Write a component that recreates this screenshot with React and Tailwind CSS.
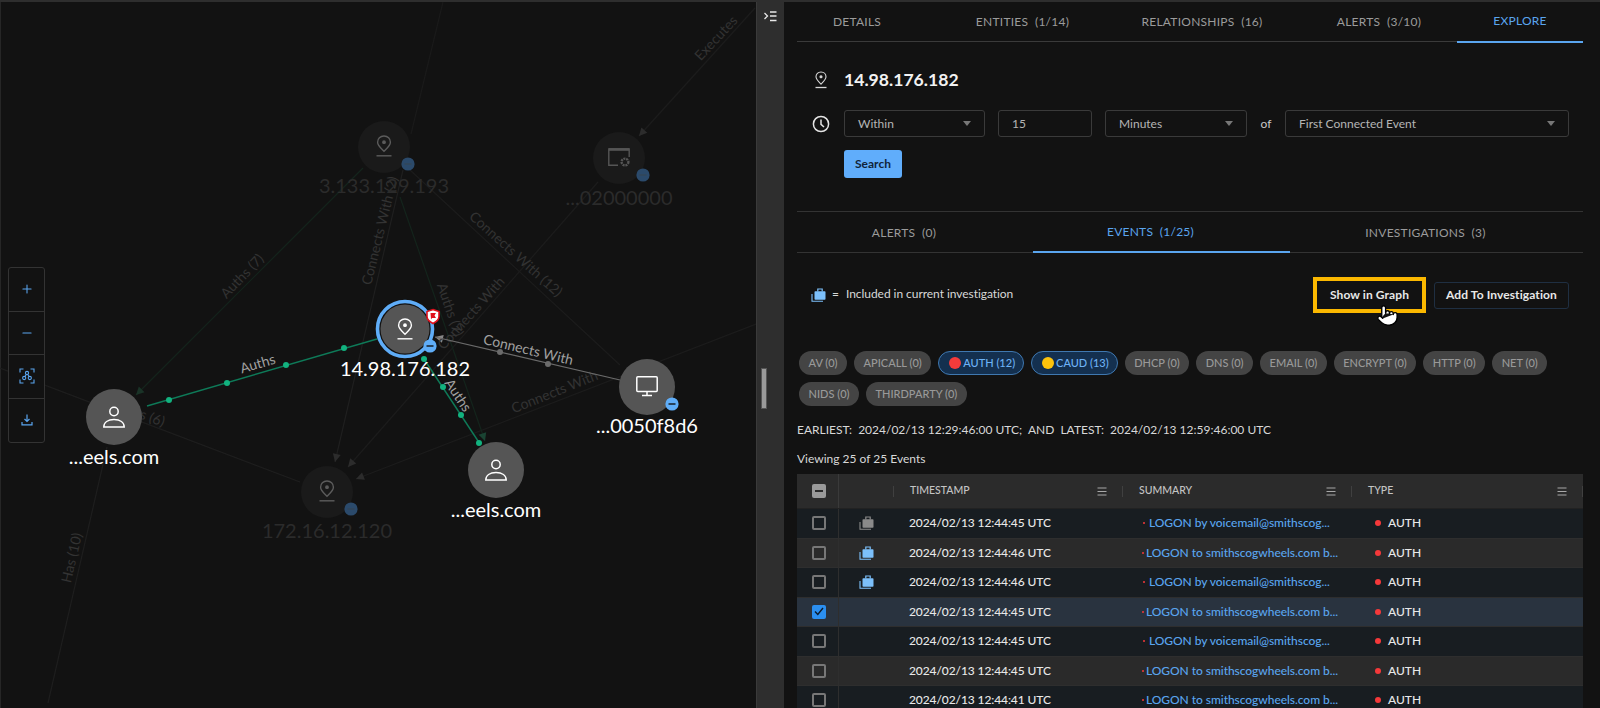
import { Minus, Plus, Pointer } from 'lucide-react'

const topTabs = [
    { label: 'DETAILS', cls: 'w-[145px] pr-[25px]' },
    { label: 'ENTITIES  (1/14)', cls: 'w-[161px]' },
    { label: 'RELATIONSHIPS  (16)', cls: 'w-[198px]' },
    { label: 'ALERTS  (3/10)', cls: 'w-[156px]' },
    { label: 'EXPLORE', cls: 'w-[126px]', active: true },
]

const subTabs = [
    { label: 'ALERTS  (0)', cls: 'w-[236px]' },
    { label: 'EVENTS  (1/25)', cls: 'w-[257px]', active: true },
    { label: 'INVESTIGATIONS  (3)', cls: 'w-[293px]' },
]

const chips = [
    { label: 'AV (0)' },
    { label: 'APICALL (0)' },
    { label: 'AUTH (12)', dot: 'bg-[#f53b3b]' },
    { label: 'CAUD (13)', dot: 'bg-[#fdc30c]' },
    { label: 'DHCP (0)' },
    { label: 'DNS (0)' },
    { label: 'EMAIL (0)' },
    { label: 'ENCRYPT (0)' },
    { label: 'HTTP (0)' },
    { label: 'NET (0)' },
    { label: 'NIDS (0)' },
    { label: 'THIRDPARTY (0)' },
]

const BY = 'LOGON by voicemail@smithscog...'
const TO = 'LOGON to smithscogwheels.com b...'

const rows = [
    { time: '2024/02/13 12:44:45 UTC', text: BY, bag: 'grey', bg: 'bg-[#181d21]' },
    { time: '2024/02/13 12:44:46 UTC', text: TO, bag: 'blue', bg: 'bg-[#2a2a2a]' },
    { time: '2024/02/13 12:44:46 UTC', text: BY, bag: 'blue', bg: 'bg-[#181d21]' },
    { time: '2024/02/13 12:44:45 UTC', text: TO, checked: true, bg: 'bg-[#29333f]' },
    { time: '2024/02/13 12:44:45 UTC', text: BY, bg: 'bg-[#181d21]' },
    { time: '2024/02/13 12:44:45 UTC', text: TO, bg: 'bg-[#2a2a2a]' },
    { time: '2024/02/13 12:44:41 UTC', text: TO, bg: 'bg-[#181d21]' },
]

const fadedLines = [
    { x1: 443, y1: 2, x2: 411, y2: 134, c: '#1a1a1a' },
    { x1: 755, y1: 8, x2: 639, y2: 136, c: '#1c1c1c' },
    { x1: 598, y1: 182, x2: 348, y2: 467, c: '#1c1c1c' },
    { x1: 410, y1: 170, x2: 620, y2: 365, c: '#1c1c1c' },
    { x1: 756, y1: 324, x2: 356, y2: 479, c: '#1c1c1c' },
    { x1: 403, y1: 170, x2: 335, y2: 462, c: '#1f1f1f' },
    { x1: 0, y1: 368, x2: 300, y2: 482, c: '#1e1e1e' },
    { x1: 107, y1: 447, x2: 48, y2: 703, c: '#1e1e1e' },
    { x1: 363, y1: 168, x2: 136, y2: 395, c: '#14241c' },
    { x1: 400, y1: 197, x2: 485, y2: 441, c: '#14241c' },
]

const fadedLabels = [
    { text: 'Executes', x: 717, y: 39, r: -47 },
    { text: 'Connects With (2)', x: 381, y: 231, r: -76 },
    { text: 'Connects With (12)', x: 515, y: 255, r: 42 },
    { text: 'Connects With', x: 472, y: 314, r: -48 },
    { text: 'Connects With', x: 555, y: 393, r: -22 },
    { text: 'Auths (7)', x: 243, y: 277, r: -46 },
    { text: 'Auths (7)', x: 449, y: 310, r: 71 },
    { text: 'Auths (6)', x: 138, y: 414, r: 20 },
    { text: 'Has (10)', x: 73, y: 558, r: -77 },
]

const arrows = [
    { x: 136, y: 395, a: 135, c: '#1a3327' },
    { x: 639, y: 136, a: 132, c: '#2c2c2c' },
    { x: 335, y: 462, a: 103, c: '#2c2c2c' },
    { x: 348, y: 467, a: 131, c: '#2c2c2c' },
    { x: 356, y: 479, a: 159, c: '#2c2c2c' },
    { x: 485, y: 441, a: 71, c: '#1a4433' },
    { x: 435, y: 337, a: 193, c: '#888888' },
]

function PinGlyph({ x, y, color }) {
    return (
        <g transform={`translate(${x - 8} ${y - 11})`} fill="none" stroke={color} strokeWidth="1.4">
            <path d="M8 1C4.2 1 1.6 3.8 1.6 7.2 1.6 10.6 5.4 13.6 8 16.2 10.6 13.6 14.4 10.6 14.4 7.2 14.4 3.8 11.8 1 8 1Z" />
            <circle cx="8" cy="7.2" r="1.2" fill={color} />
            <path d="M0.5 20.8H15.5" />
        </g>
    )
}

function PersonGlyph({ x, y }) {
    return (
        <g transform={`translate(${x - 11} ${y - 11})`} fill="none" stroke="#ffffff" strokeWidth="1.5">
            <circle cx="11" cy="5.5" r="4.2" />
            <path d="M0.8 21C0.8 16.4 5 13.6 11 13.6S21.2 16.4 21.2 21Z" />
        </g>
    )
}

function MonitorGlyph({ x, y }) {
    return (
        <g transform={`translate(${x - 11} ${y - 10})`} fill="none" stroke="#ffffff" strokeWidth="1.5">
            <rect x="0.8" y="0.8" width="20.4" height="14.6" rx="1" />
            <path d="M11 15.5V19M6 19.6H16" />
        </g>
    )
}

function AppGlyph({ x, y }) {
    return (
        <g transform={`translate(${x - 11} ${y - 10})`} fill="none" stroke="#555555" strokeWidth="1.4">
            <path d="M10 17.3H0.8V0.9H21.2V9" />
            <path d="M0.8 1.5H21.2" strokeWidth="2.6" />
            <circle cx="17" cy="14" r="3.4" strokeWidth="2.4" strokeDasharray="2 0.8" />
        </g>
    )
}

function Badge({ x, y, faded }) {
    return (
        <g>
            <circle cx={x} cy={y} r="6.6" fill={faded ? '#2b4a6b' : '#5fadf8'} />
            <path d={`M${x - 3.5} ${y}H${x + 3.5}`} stroke={faded ? '#33465a' : '#1b2733'} strokeWidth="1.6" />
        </g>
    )
}

function EdgeDots({ points, color }) {
    return points.map(([x, y]) => <circle key={x} cx={x} cy={y} r="3" fill={color} />)
}

function Graph() {
    return (
        <svg width="756" height="708" viewBox="0 0 756 708" className="absolute left-[-1px] top-[-2px]">
            {fadedLines.map((l, i) => (
                <line key={i} x1={l.x1} y1={l.y1} x2={l.x2} y2={l.y2} stroke={l.c} strokeWidth="1.2" />
            ))}
            {arrows.map((a, i) => (
                <path key={i} d="M0 0L-8 -4V4Z" fill={a.c} transform={`translate(${a.x} ${a.y}) rotate(${a.a})`} />
            ))}
            {fadedLabels.map((l, i) => (
                <text key={i} x={l.x} y={l.y} fill="#333333" fontSize="14" textAnchor="middle" dominantBaseline="middle" transform={`rotate(${l.r} ${l.x} ${l.y})`}>
                    {l.text}
                </text>
            ))}

            <line x1="147" y1="406" x2="377" y2="339" stroke="#0e7a58" strokeWidth="1.4" />
            <EdgeDots points={[[169, 400], [227, 383], [286, 365], [344, 348]]} color="#12b27f" />
            <text x="258" y="365" fill="#a0a0a0" fontSize="14" textAnchor="middle" dominantBaseline="middle" transform="rotate(-16 258 365)">Auths</text>

            <line x1="424" y1="359" x2="480" y2="444" stroke="#0e7a58" strokeWidth="1.4" />
            <EdgeDots points={[[424, 359], [443, 387], [461, 415], [479, 443]]} color="#12b27f" />
            <text x="457" y="396" fill="#a0a0a0" fontSize="14" textAnchor="middle" dominantBaseline="middle" transform="rotate(56 457 396)">Auths</text>

            <line x1="620" y1="380" x2="435" y2="337" stroke="#6b6b6b" strokeWidth="1.2" />
            <EdgeDots points={[[500, 352], [548, 364]]} color="#6b6b6b" />
            <text x="528" y="351" fill="#a0a0a0" fontSize="14" textAnchor="middle" dominantBaseline="middle" transform="rotate(13.5 528 351)">Connects With</text>

            {/* faded nodes */}
            <circle cx="384" cy="147" r="26" fill="#1a1a1a" />
            <PinGlyph x={384} y={146} color="#5c5c5c" />
            <Badge x={408} y={164} faded />
            <text x="384" y="188" fill="#2b2b2b" fontSize="20" textAnchor="middle" dominantBaseline="middle">3.133.129.193</text>

            <circle cx="619" cy="158" r="26" fill="#1a1a1a" />
            <AppGlyph x={619} y={158} />
            <Badge x={643} y={175} faded />
            <text x="619" y="200" fill="#2b2b2b" fontSize="20" textAnchor="middle" dominantBaseline="middle">...02000000</text>

            <circle cx="327" cy="492" r="26" fill="#1a1a1a" />
            <PinGlyph x={327} y={491} color="#5c5c5c" />
            <Badge x={351} y={509} faded />
            <text x="327" y="533" fill="#2b2b2b" fontSize="20" textAnchor="middle" dominantBaseline="middle">172.16.12.120</text>

            {/* active nodes */}
            <circle cx="114" cy="417" r="28" fill="#555555" />
            <PersonGlyph x={114} y={417} />
            <text x="114" y="459" fill="#ffffff" fontSize="20" textAnchor="middle" dominantBaseline="middle">...eels.com</text>

            <circle cx="496" cy="470" r="28" fill="#555555" />
            <PersonGlyph x={496} y={470} />
            <text x="496" y="512" fill="#ffffff" fontSize="20" textAnchor="middle" dominantBaseline="middle">...eels.com</text>

            <circle cx="647" cy="387" r="28" fill="#555555" />
            <MonitorGlyph x={647} y={386} />
            <Badge x={672} y={404} />
            <text x="647" y="428" fill="#ffffff" fontSize="20" textAnchor="middle" dominantBaseline="middle">...0050f8d6</text>

            <circle cx="405" cy="329" r="27.5" fill="#121212" stroke="#5fadf8" strokeWidth="3.6" />
            <circle cx="405" cy="329" r="24.5" fill="#555555" />
            <PinGlyph x={405} y={329} color="#ffffff" />
            <Badge x={430} y={346} />
            <path d="M433 309.5L439 311.5V316.5C439 320 436 322 433 323.5 430 322 427 320 427 316.5V311.5Z" fill="#ffffff" stroke="#e0101c" strokeWidth="1.6" />
            <path d="M430.5 313H436L434.5 315.5 436 318H432L431 319.5Z" fill="#e0101c" />
            <text x="405" y="371" fill="#ffffff" fontSize="20" textAnchor="middle" dominantBaseline="middle">14.98.176.182</text>
        </svg>
    )
}

function ToolbarButton({ children, last }) {
    return (
        <div className={`h-[43.5px] flex items-center justify-center text-[#5aa5ef] ${last ? '' : 'border-b border-[#333]'}`}>
            {children}
        </div>
    )
}

function Toolbar() {
    return (
        <div className="absolute left-[7px] top-[265px] w-[37px] rounded-[3px] border border-[#333] bg-[#121212]">
            <ToolbarButton><Plus size={14} strokeWidth={1.8} /></ToolbarButton>
            <ToolbarButton><Minus size={14} strokeWidth={1.8} /></ToolbarButton>
            <ToolbarButton>
                <svg width="16" height="16" viewBox="0 0 16 16" fill="none" stroke="currentColor" strokeWidth="1.1">
                    <path d="M1 4.5V1H4.5M11.5 1H15V4.5M15 11.5V15H11.5M4.5 15H1V11.5" />
                    <circle cx="8" cy="5" r="1.6" />
                    <circle cx="5.2" cy="10" r="1.6" />
                    <circle cx="10.8" cy="10" r="1.6" />
                    <path d="M7.2 6.4L6 8.6M8.8 6.4L10 8.6" />
                </svg>
            </ToolbarButton>
            <ToolbarButton last>
                <svg width="12" height="12" viewBox="0 0 12 12" fill="none" stroke="currentColor" strokeWidth="1.2">
                    <path d="M6 0.5V7.5M3.5 5L6 7.5 8.5 5" />
                    <path d="M1 8V10.8H11V8" />
                </svg>
            </ToolbarButton>
        </div>
    )
}

function Bag({ color }) {
    return (
        <svg width="15" height="14" viewBox="0 0 15 14" fill="none">
            <rect x="3.5" y="3.2" width="11" height="8.6" rx="0.8" fill={color} />
            <path d="M6.8 3.5V1H11.2V3.5" stroke={color} strokeWidth="1.2" />
            <path d="M1 6V13.2H12" stroke={color} strokeWidth="1.1" />
        </svg>
    )
}

function Caret() {
    return <span className="w-0 h-0 border-x-[4px] border-x-transparent border-t-[5px] border-t-[#777]" />
}

function SelectBox({ label, width }) {
    return (
        <div className={`h-[27px] ${width} flex items-center justify-between pl-[13px] pr-[13px] rounded-[3px] border border-[#3a3a3a] text-[12px] text-[#b5b5b5]`}>
            {label}
            <Caret />
        </div>
    )
}

function MenuLines() {
    return (
        <svg width="10" height="9" viewBox="0 0 10 9" stroke="#a8a8a8" strokeWidth="1.2">
            <path d="M0.5 1H9.5M0.5 4.5H9.5M0.5 8H9.5" />
        </svg>
    )
}

function HeaderCell({ label }) {
    return (
        <div className="flex items-center h-full pl-[16px] pr-[16px] justify-between relative">
            <span className="text-[10.5px] font-medium text-[#c4c4c4]">{label}</span>
            <MenuLines />
            <span className="absolute right-0 w-px h-[11px] bg-[#404040]" />
        </div>
    )
}

function TableRow({ row }) {
    const isBy = row.text === BY
    return (
        <div className={`grid grid-cols-[42px_55px_229px_229px_231px] h-[29.5px] border-b border-[#2e2e2e] items-center ${row.bg}`}>
            <div className="h-full flex items-center border-r border-[#2e2e2e] pl-[15px]">
                {row.checked ? (
                    <span className="w-[14px] h-[14px] rounded-[2px] bg-[#2b8ff0] flex items-center justify-center">
                        <svg width="10" height="9" viewBox="0 0 10 9" fill="none" stroke="#0c1a2a" strokeWidth="1.4">
                            <path d="M1 4.5L3.8 7.5 9 1" />
                        </svg>
                    </span>
                ) : (
                    <span className="w-[14px] h-[14px] rounded-[2px] border-2 border-[#777]" />
                )}
            </div>
            <div className="flex justify-center">
                {row.bag && <Bag color={row.bag === 'blue' ? '#7cc0fb' : '#8a8a8a'} />}
            </div>
            <div className="pl-[15px] text-[12px] tracking-[-0.1px] font-medium text-[#e8e8e8] whitespace-nowrap">{row.time}</div>
            <div className={`flex items-center whitespace-nowrap text-[12px] tracking-[-0.05px] font-medium text-[#5aa5ef] ${isBy ? 'pl-[20px] gap-[4px]' : 'pl-[19px] gap-[2px]'}`}>
                <span className="w-[2px] h-[2px] rounded-full bg-[#f5393a]" />
                {row.text}
            </div>
            <div className="flex items-center pl-[23px] gap-[7px] text-[12px] font-medium text-[#e8e8e8]">
                <span className="w-[6px] h-[6px] rounded-full bg-[#f5393a]" />
                AUTH
            </div>
        </div>
    )
}

export default function App() {
    return (
        <div className="flex w-[1600px] h-[708px] overflow-hidden bg-[#121212] font-['Lato',sans-serif] border-t-2 border-[#2e2e2e] box-border">
            <div className="relative w-[756px] h-full border-l border-[#262626]">
                <Graph />
                <Toolbar />
            </div>

            <div className="w-[28px] h-full bg-[#2e2e2e] flex flex-col items-center relative border-l border-[#3a3a3a]">
                <svg className="mt-[9px]" width="13" height="11" viewBox="0 0 13 11" fill="none" stroke="#e8e8e8" strokeWidth="1.3">
                    <path d="M0.5 2L3.5 5 0.5 8" />
                    <path d="M6 1H12.5M6 5H12.5M6 9.5H12.5" strokeWidth="1.5" />
                </svg>
                <span className="absolute left-[4px] top-[366px] w-[6px] h-[41px] bg-[#9a9a9a] border border-[#555]" />
            </div>

            <div className="flex-1 min-w-0 pl-[13px] pr-[17px] flex flex-col">
                <div className="flex h-[40px] border-b border-[#3a3a3a] shrink-0">
                    {topTabs.map(tab => (
                        <div
                            key={tab.label}
                            className={`${tab.cls} h-[41px] pb-[1px] flex items-center justify-center text-[12px] tracking-[0.25px] whitespace-pre ${tab.active ? 'text-[#5aa5ef] border-b-2 border-[#5aa5ef]' : 'text-[#9b9b9b]'}`}
                        >
                            {tab.label}
                        </div>
                    ))}
                </div>

                <div className="flex items-center mt-[27px] h-[22px]">
                    <div className="w-[47px] pl-[16px]">
                        <svg width="16" height="22" viewBox="0 0 16 22" fill="none" stroke="#d8d8d8" strokeWidth="1.1">
                            <path d="M8 3C5 3 3 5.2 3 7.8 3 10.6 6 13 8 15.2 10 13 13 10.6 13 7.8 13 5.2 11 3 8 3Z" />
                            <circle cx="8" cy="7.8" r="1" fill="#d8d8d8" />
                            <path d="M2.5 18.5H13.5" strokeWidth="1.3" />
                        </svg>
                    </div>
                    <span className="text-[17.6px] font-bold text-[#f2f2f2]">14.98.176.182</span>
                </div>

                <div className="flex items-center mt-[19px]">
                    <div className="w-[47px] pl-[15px]">
                        <svg width="18" height="18" viewBox="0 0 18 18" fill="none" stroke="#e4e4e4" strokeWidth="1.5">
                            <circle cx="9" cy="9" r="7.6" />
                            <path d="M9 4.5V9.3L12 12" />
                        </svg>
                    </div>
                    <SelectBox label="Within" width="w-[141px]" />
                    <div className="h-[27px] w-[94px] ml-[13px] flex items-center pl-[13px] rounded-[3px] border border-[#3a3a3a] text-[12px] text-[#b5b5b5]">15</div>
                    <div className="ml-[13px]"><SelectBox label="Minutes" width="w-[142px]" /></div>
                    <span className="w-[38px] text-center text-[12px] text-[#c8c8c8]">of</span>
                    <SelectBox label="First Connected Event" width="w-[284px]" />
                </div>

                <button className="ml-[47px] mt-[13px] w-[58px] h-[28px] rounded-[3px] bg-[#60adfb] text-[12px] font-bold text-[#10243a] shrink-0">Search</button>

                <div className="mt-[33px] border-t border-[#333] border-b flex h-[42px] shrink-0">
                    {subTabs.map(tab => (
                        <div
                            key={tab.label}
                            className={`${tab.cls} h-[41px] pr-[22px] flex items-center justify-center text-[12px] tracking-[0.25px] whitespace-pre ${tab.active ? 'text-[#5aa5ef] border-b-2 border-[#5aa5ef]' : 'text-[#9b9b9b]'}`}
                        >
                            {tab.label}
                        </div>
                    ))}
                </div>

                <div className="flex items-center mt-[24px] h-[36px] shrink-0 relative">
                    <div className="ml-[14px]"><Bag color="#7cc0fb" /></div>
                    <span className="ml-[6px] mb-[2px] text-[12px] text-[#d8d8d8]">=</span>
                    <span className="ml-[7px] mb-[2px] text-[12px] tracking-[-0.05px] text-[#d8d8d8]">Included in current investigation</span>
                    <button className="ml-auto w-[113px] h-[36px] border-[4px] border-[#fbb800] bg-[#121212] text-[12px] tracking-[0.1px] font-bold text-[#e8e8e8]">
                        Show in Graph
                    </button>
                    <button className="ml-[8px] mr-[14px] w-[135px] h-[27px] rounded-[3px] border border-[#1f2f42] text-[12px] tracking-[0.1px] font-bold text-[#e8e8e8]">
                        Add To Investigation
                    </button>
                    <Pointer className="absolute left-[579px] top-[27px]" size={23} fill="#ffffff" stroke="#000000" strokeWidth={1.4} />
                </div>

                <div className="mt-[38px] ml-[2px] flex flex-wrap gap-x-[7px] gap-y-[7px] shrink-0">
                    {chips.map(chip => (
                        <span
                            key={chip.label}
                            className={`h-[24px] flex items-center gap-[2px] rounded-full text-[11px] font-medium whitespace-nowrap ${chip.dot ? 'bg-[#14304f] border border-[#3f78b0] text-[#6db2f6] pl-[10px] pr-[8px]' : 'px-[9.5px] bg-[#444] text-[#999]'}`}
                        >
                            {chip.dot && <span className={`w-[12px] h-[12px] rounded-full ${chip.dot}`} />}
                            {chip.label}
                        </span>
                    ))}
                </div>

                <p className="mt-[15px] text-[12px] text-[#d8d8d8] whitespace-pre">EARLIEST:  2024/02/13 12:29:46:00 UTC;  AND  LATEST:  2024/02/13 12:59:46:00 UTC</p>
                <p className="mt-[11px] text-[12px] text-[#d8d8d8]">Viewing 25 of 25 Events</p>

                <div className="mt-[6px] shrink-0">
                    <div className="grid grid-cols-[42px_55px_229px_229px_231px] h-[35px] bg-[#2b2b2b] border-b border-[#222] items-center">
                        <div className="h-full flex items-center border-r border-[#3a3a3a] pl-[15px]">
                            <span className="w-[14px] h-[14px] rounded-[2px] bg-[#9a9a9a] flex items-center justify-center">
                                <span className="w-[8px] h-[2px] bg-[#2b2b2b]" />
                            </span>
                        </div>
                        <div className="relative h-full flex items-center">
                            <span className="absolute right-0 w-px h-[11px] bg-[#404040]" />
                        </div>
                        <HeaderCell label="TIMESTAMP" />
                        <HeaderCell label="SUMMARY" />
                        <HeaderCell label="TYPE" />
                    </div>
                    {rows.map((row, i) => <TableRow key={i} row={row} />)}
                </div>
            </div>
        </div>
    )
}
